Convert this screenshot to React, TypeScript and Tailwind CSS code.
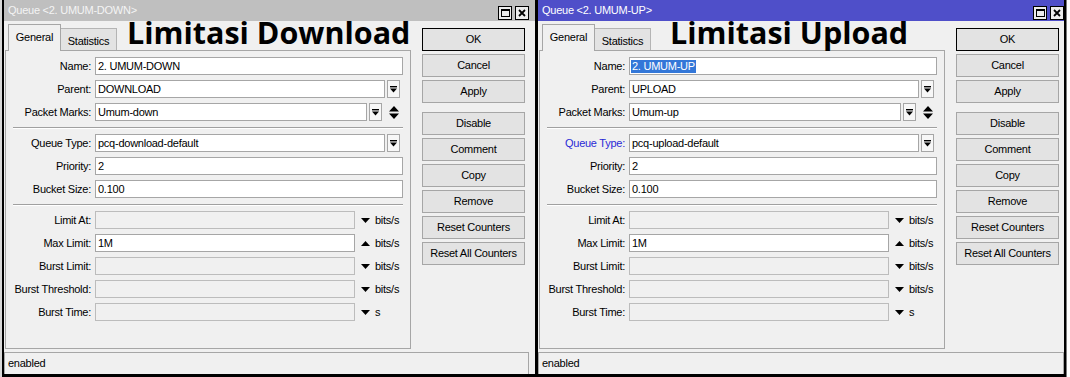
import React from 'react';

function DropBtn() {
  return (
    <div className="ml-[2px] flex h-[18px] w-[13px] shrink-0 items-center justify-center border border-[#a6a6a6] bg-[#f7f7f7]">
      <svg width="7" height="7" viewBox="0 0 7 7">
        <rect x="0" y="0" width="7" height="1.4" fill="#000" />
        <path d="M0 2.6h7L3.5 6.6z" fill="#000" />
      </svg>
    </div>
  );
}

function UpDown() {
  return (
    <svg width="10" height="13" viewBox="0 0 10 13" className="ml-[7px] shrink-0">
      <path d="M5 0L10 5.5H0z M0 7.5h10L5 13z" fill="#000" />
    </svg>
  );
}

function Field({
  w,
  value,
  disabled,
  selected,
}: {
  w: string;
  value?: string;
  disabled?: boolean;
  selected?: boolean;
}) {
  return (
    <div
      className={`flex h-[18px] shrink-0 items-center border ${w} ${
        disabled ? 'border-[#bcbcbc] bg-[#f0f0f0]' : 'border-[#a6a6a6] bg-white'
      } ${selected ? 'pl-[1px]' : 'pl-[2px]'}`}
    >
      {selected ? (
        <span className="bg-[#3377d8] px-[1px] text-white">{value}</span>
      ) : (
        <span>{value}</span>
      )}
    </div>
  );
}

function Row({
  label,
  blue,
  children,
}: {
  label: string;
  blue?: boolean;
  children: React.ReactNode;
}) {
  return (
    <div className="flex h-[18px] items-center">
      <div className={`w-[85px] shrink-0 text-right ${blue ? 'text-[#2a2ad6]' : ''}`}>{label}</div>
      <div className="ml-[4px] flex items-center">{children}</div>
    </div>
  );
}

function Sep() {
  return <div className="mx-[7px] mt-[6px] mb-[5px] h-[2px] border-t border-b border-t-[#a0a0a0] border-b-white" />;
}

function LimitRow({
  label,
  value,
  up,
  unit,
}: {
  label: string;
  value?: string;
  up?: boolean;
  unit: string;
}) {
  return (
    <Row label={label}>
      <Field w="w-[260px]" value={value} disabled={!value} />
      <svg width="9" height="5" viewBox="0 0 9 5" className="ml-[6px] shrink-0">
        <path d={up ? 'M4.5 0L9 5H0z' : 'M0 0h9L4.5 5z'} fill="#000" />
      </svg>
      <span className="ml-[5px]">{unit}</span>
    </Row>
  );
}

function Btn({ children, def }: { children: React.ReactNode; def?: boolean }) {
  return (
    <div
      className={`flex h-[23px] w-[103px] items-center justify-center border bg-[#e3e3e3] ${
        def ? 'border-black' : 'border-[#a6a6a6]'
      }`}
    >
      {children}
    </div>
  );
}

function QueueWindow({
  title,
  active,
  banner,
  name,
  parent,
  marks,
  qtype,
  upload,
}: {
  title: string;
  active?: boolean;
  banner: string;
  name: string;
  parent: string;
  marks: string;
  qtype: string;
  upload?: boolean;
}) {
  return (
    <div
      className={`relative flex h-[377px] shrink-0 flex-col border-l-2 border-b-[3px] border-black bg-[#f0f0f0] ${
        upload ? 'w-[530px] border-r-2' : 'w-[534px] border-r'
      }`}
    >
      {/* title bar */}
      <div
        className={`flex h-[21px] shrink-0 justify-between pl-[4px] ${
          active ? 'bg-[#4f4fc9] text-white' : 'bg-[#bfbfbf] text-[#f4f4f4]'
        } ${upload ? 'pr-0' : 'pr-[6px]'}`}
      >
        <span className="self-center">{title}</span>
        <div className="flex gap-[3px] self-end pb-[1px]">
          <div className="flex h-[14px] w-[14px] items-center justify-center border border-black bg-[#ececec]">
            <div className="h-[8px] w-[9px] border border-t-2 border-black" />
          </div>
          <div className="flex h-[14px] w-[14px] items-center justify-center border border-black bg-[#ececec]">
            <svg width="8" height="8" viewBox="0 0 8 8">
              <path d="M1 1L7 7M7 1L1 7" stroke="#000" strokeWidth="1.8" />
            </svg>
          </div>
        </div>
      </div>

      {/* annotation */}
      <div
        className={`absolute top-[17px] font-['Open_Sans',sans-serif] text-[30.5px] leading-none font-bold tracking-normal text-black ${
          upload ? 'left-[132px]' : 'left-[123px]'
        }`}
      >
        {banner}
      </div>

      <div className="flex flex-1">
        <div className="ml-[1px] flex w-[406px] flex-col">
          <div className="flex h-[29px] items-end pl-[3px]">
            <div className="relative z-10 -mb-px flex h-[27px] w-[53px] justify-center border border-b-0 border-[#a6a6a6] bg-[#f0f0f0] pt-[6px]">
              General
            </div>
            <div className="flex h-[22px] w-[56px] items-center justify-center border border-b-0 border-l-0 border-[#b4b4b4] bg-[#e3e3e3] pt-[3px]">
              Statistics
            </div>
          </div>
          <div className="flex h-[299px] flex-col border border-[#a6a6a6] pt-[6px]">
            <div className="flex flex-col gap-[5px]">
              <Row label="Name:">
                <Field w="w-[308px]" value={name} selected={upload} />
              </Row>
              <Row label="Parent:">
                <Field w="w-[290px]" value={parent} />
                <DropBtn />
              </Row>
              <Row label="Packet Marks:">
                <Field w="w-[272px]" value={marks} />
                <DropBtn />
                <UpDown />
              </Row>
            </div>
            <Sep />
            <div className="flex flex-col gap-[5px]">
              <Row label="Queue Type:" blue={upload}>
                <Field w="w-[290px]" value={qtype} />
                <DropBtn />
              </Row>
              <Row label="Priority:">
                <Field w="w-[308px]" value="2" />
              </Row>
              <Row label="Bucket Size:">
                <Field w="w-[308px]" value="0.100" />
              </Row>
            </div>
            <Sep />
            <div className="flex flex-col gap-[5px]">
              <LimitRow label="Limit At:" unit="bits/s" />
              <LimitRow label="Max Limit:" value="1M" up unit="bits/s" />
              <LimitRow label="Burst Limit:" unit="bits/s" />
              <LimitRow label="Burst Threshold:" unit="bits/s" />
              <LimitRow label="Burst Time:" unit="s" />
            </div>
          </div>
        </div>

        <div className="ml-[11px] flex flex-col gap-[3px] pt-[7px]">
          <Btn def>OK</Btn>
          <Btn>Cancel</Btn>
          <Btn>Apply</Btn>
          <div className="mt-[6px] flex flex-col gap-[3px]">
            <Btn>Disable</Btn>
            <Btn>Comment</Btn>
            <Btn>Copy</Btn>
            <Btn>Remove</Btn>
            <Btn>Reset Counters</Btn>
            <Btn>Reset All Counters</Btn>
          </div>
        </div>
      </div>

      {/* status bar */}
      <div
        className={`mt-[1px] flex h-[22px] shrink-0 items-center border border-b-0 border-[#a6a6a6] pl-[3px] ${
          upload ? 'mr-0' : 'mr-[6px]'
        }`}
      >
        enabled
      </div>
    </div>
  );
}

export default function App() {
  return (
    <div className="flex h-[377px] w-[1070px] overflow-hidden bg-white font-['Liberation_Sans',Arial,sans-serif] text-[11px] leading-[13px] tracking-[-0.25px] text-black">
      <div className="w-[2px] shrink-0 bg-[#d8d8d8]" />
      <QueueWindow
        title="Queue <2. UMUM-DOWN>"
        banner="Limitasi Download"
        name="2. UMUM-DOWN"
        parent="DOWNLOAD"
        marks="Umum-down"
        qtype="pcq-download-default"
      />
      <QueueWindow
        title="Queue <2. UMUM-UP>"
        active
        upload
        banner="Limitasi Upload"
        name="2. UMUM-UP"
        parent="UPLOAD"
        marks="Umum-up"
        qtype="pcq-upload-default"
      />
      <div className="flex-1 border-l border-[#7a7a7a] bg-white" />
    </div>
  );
}
